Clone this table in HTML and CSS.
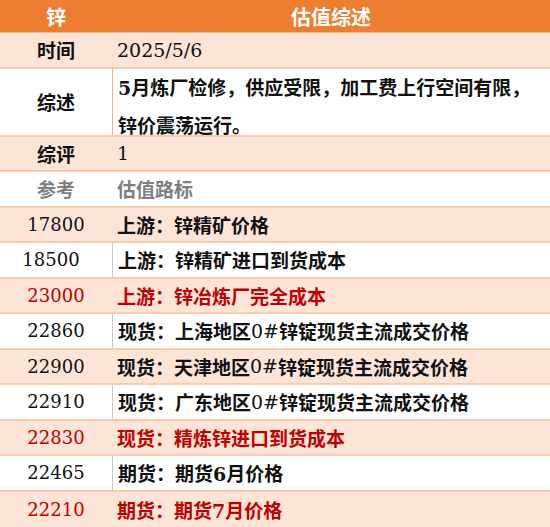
FILE: index.html
```html
<!DOCTYPE html>
<html lang="zh-CN">
<head>
<meta charset="utf-8">
<title>锌 估值综述</title>
<link rel="stylesheet" href="styles.css">
</head>
<body>
<div class="sheet">
  <div class="row head"><div class="c1">锌</div><div class="c2 center">估值综述</div></div>
  <div class="row peach"><div class="c1">时间</div><div class="c2"><span class="lat">2025/5/6</span></div></div>
  <div class="row white double"><div class="c1">综述</div><div class="c2 divo">5月炼厂检修，供应受限，加工费上行空间有限，<br>锌价震荡运行。</div></div>
  <div class="row peach"><div class="c1">综评</div><div class="c2"><span class="lat">1</span></div></div>
  <div class="row white grey"><div class="c1">参考</div><div class="c2">估值路标</div></div>
  <div class="row peach"><div class="c1 num">17800</div><div class="c2">上游：锌精矿价格</div></div>
  <div class="row white"><div class="c1 num shift">18500</div><div class="c2 divg">上游：锌精矿进口到货成本</div></div>
  <div class="row peach red"><div class="c1 num">23000</div><div class="c2">上游：锌冶炼厂完全成本</div></div>
  <div class="row white"><div class="c1 num">22860</div><div class="c2 divg">现货：上海地区<span class="lat">0#</span>锌锭现货主流成交价格</div></div>
  <div class="row peach"><div class="c1 num">22900</div><div class="c2">现货：天津地区<span class="lat">0#</span>锌锭现货主流成交价格</div></div>
  <div class="row white"><div class="c1 num">22910</div><div class="c2 divg">现货：广东地区<span class="lat">0#</span>锌锭现货主流成交价格</div></div>
  <div class="row peach red"><div class="c1 num">22830</div><div class="c2">现货：精炼锌进口到货成本</div></div>
  <div class="row white"><div class="c1 num">22465</div><div class="c2 divg">期货：期货6月价格</div></div>
  <div class="row peach red last"><div class="c1 num">22210</div><div class="c2">期货：期货7月价格</div></div>
</div>
</body>
</html>
```
FILE: styles.css
```css
html, body {
  margin: 0;
  padding: 0;
  background: #ffffff;
}
.sheet {
  width: 550px;
  font-family: "DejaVu Serif", "Noto Sans CJK SC", serif;
  font-size: 19px;
  font-weight: 700;
  color: #111111;
}
.row {
  display: flex;
  box-sizing: border-box;
  height: 35.5px;
  border-bottom: 2px solid #f8cbad;
}
.row.head {
  height: 33px;
  background: #ed7d31;
  color: #ffffff;
  border-bottom: 1px solid #f4b183;
  font-size: 20px;
}
.row.peach { background: #fce4d6; }
.row.white { background: #ffffff; }
.row.double { height: 68px; }
.row.last { border-bottom: none; }
.row.grey { color: #7f7f7f; }
.row.red { color: #c00000; }
.c1 {
  width: 112px;
  flex: none;
  display: flex;
  align-items: center;
  justify-content: center;
}
.c2 {
  flex: 1;
  display: flex;
  align-items: center;
  padding-left: 5px;
  white-space: nowrap;
}
.c2.center {
  justify-content: center;
  padding-left: 0;
}
.row.double .c2 {
  display: block;
  line-height: 38px;
  padding-top: 0;
}
.divo { border-left: 1px solid #f4b183; }
.divg { border-left: 1px solid #c9c9c9; }
.num {
  font-weight: 400;
  font-size: 18px;
}
.lat { font-weight: 400; }
.shift { padding-right: 10px; box-sizing: border-box; }
```
